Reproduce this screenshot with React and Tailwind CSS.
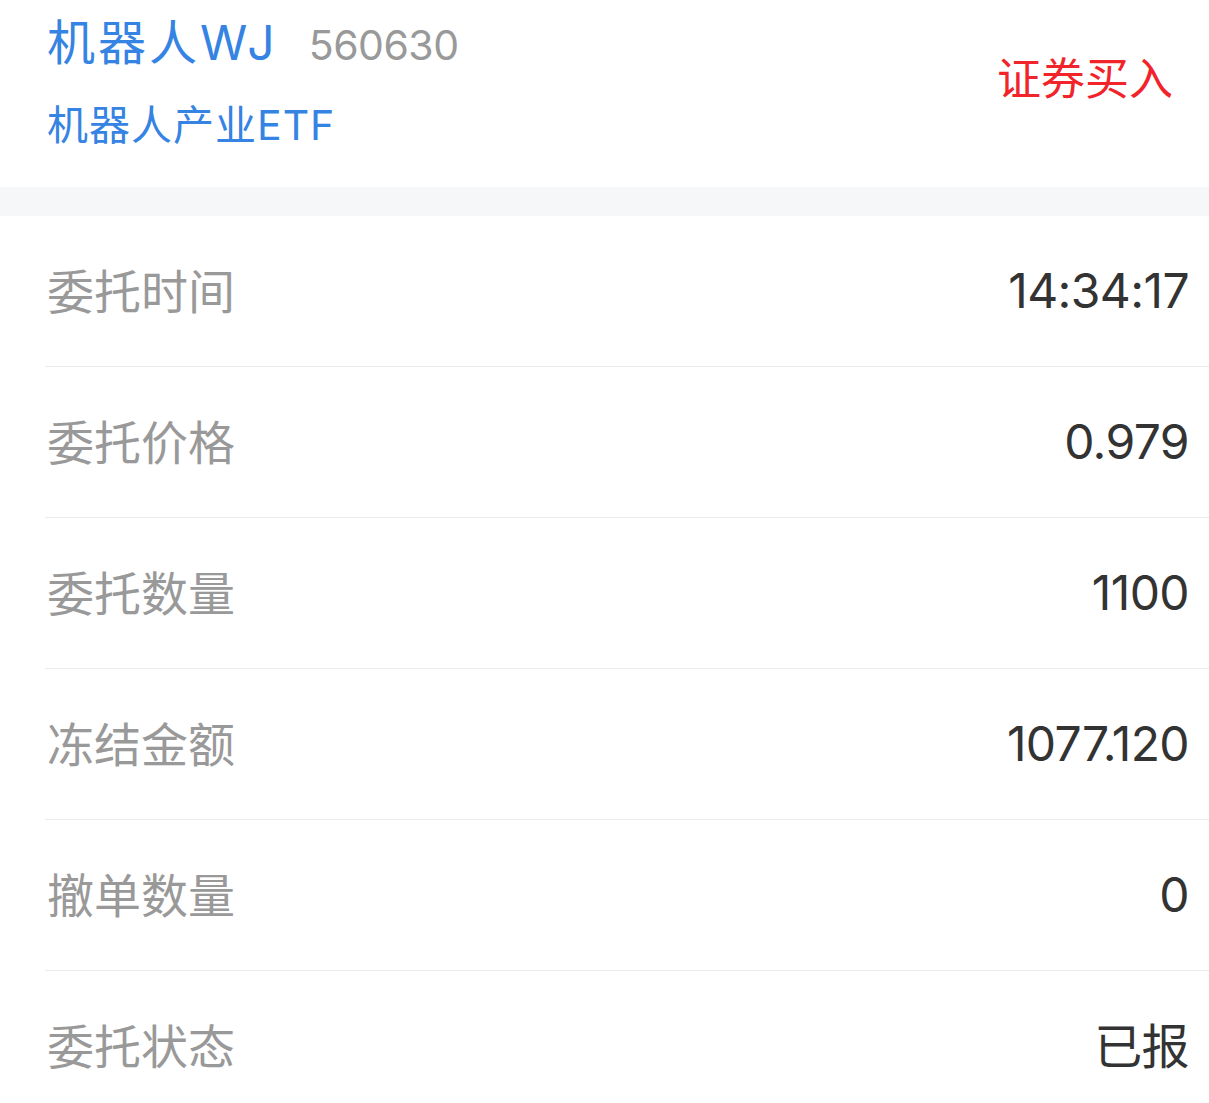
import React from "react";

const rows = [
  ["委托时间", "14:34:17"],
  ["委托价格", "0.979"],
  ["委托数量", "1100"],
  ["冻结金额", "1077.120"],
  ["撤单数量", "0"],
  ["委托状态", "已报"],
];

export default function App() {
  const font = { fontFamily: "Inter, 'Noto Sans CJK SC', sans-serif" };
  return (
    <div className="w-[1209px] h-[1103px] bg-white overflow-hidden" style={font}>
      <div className="h-[187px] flex justify-between pl-[47px] pr-[36px]">
        <div className="flex flex-col pt-[13px]">
          <div className="flex items-baseline h-[60px]">
            <span className="text-[48px] leading-[60px] tracking-[3px] text-[#3583e3]">机器人WJ</span>
            <span className="ml-[31px] text-[41px] leading-[60px] tracking-[-0.5px] text-[#999999]">560630</span>
          </div>
          <div className="mt-[27px] text-[41px] leading-[50px] tracking-[1px] text-[#3583e3]">机器人产业ETF</div>
        </div>
        <div className="pt-[51px] text-[44px] leading-[56px] text-[#f0242a]">证券买入</div>
      </div>
      <div className="h-[29px] bg-[#f6f7f9]" />
      {rows.map(([k, v], i) => (
        <div key={k} className="pl-[45px]">
          <div
            className={
              "h-[151px] flex items-center justify-between pl-[2px] pr-[20px] " +
              (i < rows.length - 1 ? "border-b border-[#ebebeb]" : "")
            }
          >
            <span className="text-[47px] leading-none text-[#999999]">{k}</span>
            <span className="text-[48px] leading-none tracking-[-0.6px] text-[#333333]">{v}</span>
          </div>
        </div>
      ))}
    </div>
  );
}
